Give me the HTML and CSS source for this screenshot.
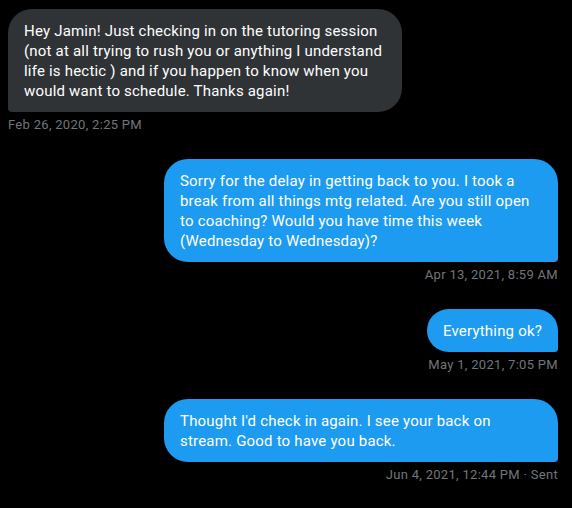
FILE: index.html
```html
<!DOCTYPE html>
<html>
<head>
<meta charset="utf-8">
<link rel="stylesheet" href="styles.css">
</head>
<body>
<div class="thread">
  <div class="msg in">
    <div class="bubble">Hey Jamin! Just checking in on the tutoring session (not at all trying to rush you or anything I understand life is hectic ) and if you happen to know when you would want to schedule. Thanks again!</div>
    <div class="meta">Feb 26, 2020, 2:25 PM</div>
  </div>
  <div class="msg out">
    <div class="bubble">Sorry for the delay in getting back to you. I took a break from all things mtg related. Are you still open to coaching? Would you have time this week (Wednesday to Wednesday)?</div>
    <div class="meta">Apr 13, 2021, 8:59 AM</div>
  </div>
  <div class="msg out">
    <div class="bubble">Everything ok?</div>
    <div class="meta">May 1, 2021, 7:05 PM</div>
  </div>
  <div class="msg out">
    <div class="bubble">Thought I'd check in again. I see your back on stream. Good to have you back.</div>
    <div class="meta">Jun 4, 2021, 12:44 PM · Sent</div>
  </div>
</div>
</body>
</html>
```
FILE: styles.css
```css
html, body {
  margin: 0;
  padding: 0;
  background: #000;
}
body {
  font-family: Roboto, "Liberation Sans", sans-serif;
  color: #e7e9ea;
}
.thread {
  display: flex;
  flex-direction: column;
  gap: 26px;
  padding: 9px 14px 0 8px;
}
.msg {
  display: flex;
  flex-direction: column;
  gap: 5px;
}
.msg.in { align-items: flex-start; }
.msg.out { align-items: flex-end; }
.bubble {
  max-width: 362px;
  padding: 12px 16px 11px;
  font-size: 15px;
  line-height: 20px;
  letter-spacing: 0.2px;
  color: #fff;
  border-radius: 24px;
}
.in .bubble {
  background: #2f3336;
  border-bottom-left-radius: 4px;
}
.out .bubble {
  background: #1d9bf0;
  border-bottom-right-radius: 4px;
}
.meta {
  font-size: 13px;
  line-height: 16px;
  letter-spacing: 0.3px;
  color: #71767b;
}
```
